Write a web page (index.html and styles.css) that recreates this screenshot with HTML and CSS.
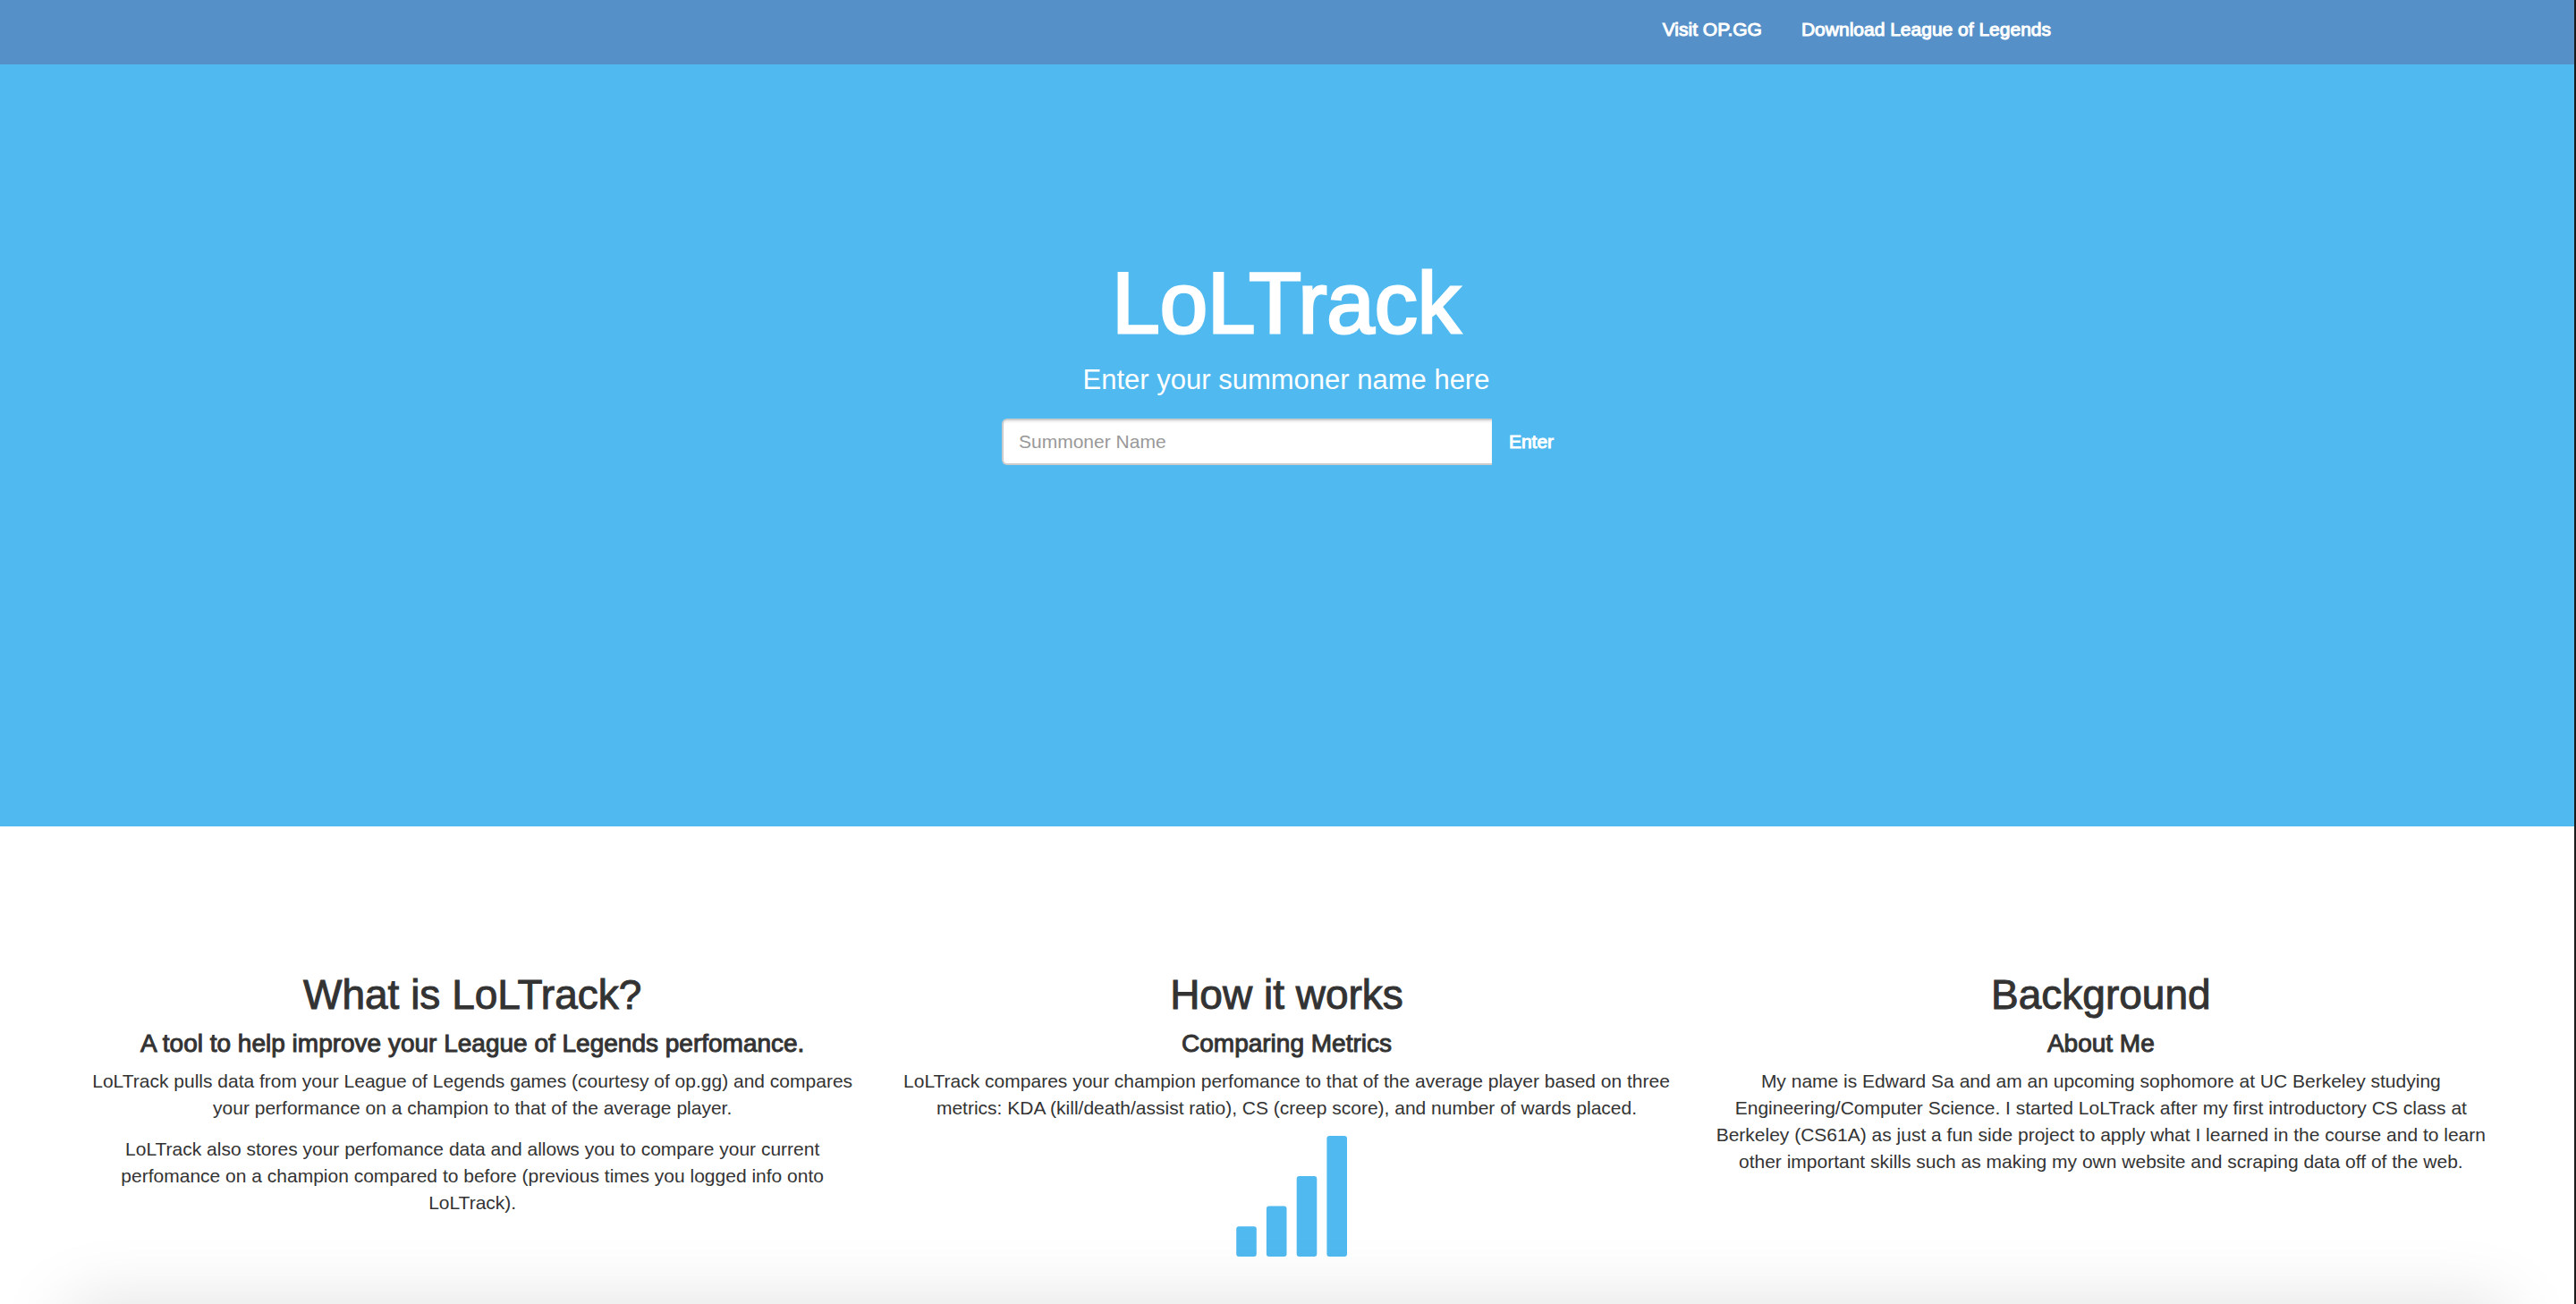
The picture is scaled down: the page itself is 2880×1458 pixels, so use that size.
FILE: index.html
```html
<!DOCTYPE html>
<html lang="en">
<head>
<meta charset="utf-8">
<title>LoLTrack</title>
<link rel="stylesheet" href="styles.css">
</head>
<body>
<header class="navbar">
  <nav class="navbar-inner">
    <a class="nav-link" href="#opgg">Visit OP.GG</a>
    <a class="nav-link" href="#download">Download League of Legends</a>
  </nav>
</header>
<main>
  <section class="hero">
    <h1 class="hero-title">LoLTrack</h1>
    <label class="hero-lead" for="summoner">Enter your summoner name here</label>
    <form class="search">
      <input class="search-input" id="summoner" type="text" placeholder="Summoner Name">
      <button class="search-button" type="submit">Enter</button>
    </form>
  </section>
  <section class="about">
    <article class="column">
      <h2 class="column-title">What is LoLTrack?</h2>
      <h3 class="column-subtitle">A tool to help improve your League of Legends perfomance.</h3>
      <p class="column-text">LoLTrack pulls data from your League of Legends games (courtesy of op.gg) and compares your performance on a champion to that of the average player.</p>
      <p class="column-text">LoLTrack also stores your perfomance data and allows you to compare your current perfomance on a champion compared to before (previous times you logged info onto LoLTrack).</p>
    </article>
    <article class="column">
      <h2 class="column-title">How it works</h2>
      <h3 class="column-subtitle">Comparing Metrics</h3>
      <p class="column-text">LoLTrack compares your champion perfomance to that of the average player based on three metrics: KDA (kill/death/assist ratio), CS (creep score), and number of wards placed.</p>
      <svg class="signal" viewBox="0 0 135 135" aria-hidden="true">
        <rect x="11.2" y="101.2" width="22.6" height="33.8" rx="3"/>
        <rect x="44.9" y="78.5" width="22.6" height="56.5" rx="3"/>
        <rect x="78.7" y="45" width="22.6" height="90" rx="3"/>
        <rect x="112.4" y="0" width="22.6" height="135" rx="3"/>
      </svg>
    </article>
    <article class="column">
      <h2 class="column-title">Background</h2>
      <h3 class="column-subtitle">About Me</h3>
      <p class="column-text">My name is Edward Sa and am an upcoming sophomore at UC Berkeley studying Engineering/Computer Science. I started LoLTrack after my first introductory CS class at Berkeley (CS61A) as just a fun side project to apply what I learned in the course and to learn other important skills such as making my own website and scraping data off of the web.</p>
    </article>
  </section>
</main>
<div class="bottom-shade"></div>
<div class="edge"></div>
</body>
</html>
```
FILE: styles.css
```css
* {
  box-sizing: border-box;
}

body {
  margin: 0;
  overflow-x: hidden;
  background: #fff;
  color: #333;
  font: 21px/30px "Liberation Sans", Arial, sans-serif;
}

.navbar {
  height: 72px;
  padding-right: 4px;
  background: #5590c8;
}

.navbar-inner {
  display: flex;
  justify-content: flex-end;
  gap: 44px;
  max-width: 1756px;
  margin: 0 auto;
  padding: 18px 23px 0;
}

.nav-link {
  color: #fff;
  text-decoration: none;
  -webkit-text-stroke: 1px #fff;
}

.hero {
  display: flex;
  flex-direction: column;
  align-items: center;
  padding: 214px 4px 404px 0;
  background: #4fb9f0;
  color: #fff;
}

.hero-title {
  margin: 0;
  font-size: 96px;
  line-height: 106px;
  font-weight: 400;
  -webkit-text-stroke: 3px #fff;
}

.hero-lead {
  margin-top: 12px;
  font-size: 31px;
  line-height: 42px;
}

.search {
  display: flex;
  width: 636px;
  margin-top: 22px;
}

.search-input {
  flex: 1;
  min-width: 0;
  height: 52px;
  padding: 0 17px;
  border: 2px solid #ccc;
  border-right: 0;
  border-radius: 6px 0 0 6px;
  background: #fff;
  box-shadow: inset 0 2px 2px rgba(0, 0, 0, 0.08);
  color: #555;
  font: inherit;
}

.search-input::placeholder {
  color: #999;
  opacity: 1;
}

.search-button {
  width: 88px;
  padding: 0;
  border: 0;
  background: transparent;
  color: #fff;
  font: inherit;
  -webkit-text-stroke: 1px #fff;
}

.about {
  display: grid;
  grid-template-columns: repeat(3, 1fr);
  padding: 163px 76px 42px 73px;
  text-align: center;
}

.column {
  padding: 0 22px;
}

.column-title {
  margin: 0 0 15px;
  font-size: 46px;
  line-height: 50px;
  font-weight: 400;
  -webkit-text-stroke: 1px #333;
}

.column-subtitle {
  margin: 0 0 12px;
  font-size: 28px;
  line-height: 30px;
  font-weight: 400;
  -webkit-text-stroke: 1px #333;
}

.column-text {
  margin: 0 0 16px;
}

.signal {
  display: block;
  width: 135px;
  height: 135px;
  margin: 0 auto;
  fill: #4fb9f0;
}

/* soft shade rising from the bottom of the window */
.bottom-shade {
  position: fixed;
  top: 100vh;
  left: 76px;
  right: 78px;
  height: 120px;
  box-shadow: 0 0 80px rgba(0, 0, 0, 0.125);
}

/* dark line along the window's right side */
.edge {
  position: fixed;
  top: 0;
  right: 0;
  bottom: 0;
  width: 2px;
  background: #1b1b1b;
}
```
